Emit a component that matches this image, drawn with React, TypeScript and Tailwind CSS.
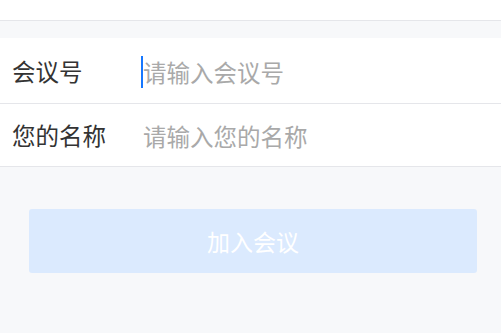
import React, { useState } from 'react';

const FONT = { fontFamily: '"Noto Sans CJK SC", "Noto Sans", sans-serif' };

type FieldRowProps = {
  label: string;
  placeholder: string;
  value: string;
  onChange: (v: string) => void;
  focused?: boolean;
  className: string;
};

function FieldRow({ label, placeholder, value, onChange, focused, className }: FieldRowProps) {
  return (
    <div className={`flex items-center bg-white border-b border-[#e5e6ea] ${className}`}>
      <label className="w-[143px] pl-[12px] text-[23.5px] text-[#333333] leading-none">{label}</label>
      <div className="relative flex-1">
        {focused && (
          <span className="absolute left-[-2px] top-1/2 -translate-y-1/2 w-[2px] h-[32px] bg-[#1677ff]" />
        )}
        <input
          value={value}
          onChange={(e) => onChange(e.target.value)}
          placeholder={placeholder}
          className="w-full bg-transparent outline-none text-[23.5px] leading-none text-[#333333] placeholder:text-[#a9a9a9] caret-transparent"
          style={FONT}
        />
      </div>
    </div>
  );
}

export default function App() {
  const [meetingId, setMeetingId] = useState('');
  const [name, setName] = useState('');
  const canJoin = meetingId.trim() !== '' && name.trim() !== '';

  return (
    <div className="w-[501px] h-[333px] bg-[#f7f8fa] overflow-hidden" style={FONT}>
      <div className="h-[21px] bg-white border-b border-[#e5e6ea]" />
      <div className="h-[17px]" />
      <FieldRow
        label="会议号"
        placeholder="请输入会议号"
        value={meetingId}
        onChange={setMeetingId}
        focused
        className="h-[66px] pt-[2px]"
      />
      <FieldRow
        label="您的名称"
        placeholder="请输入您的名称"
        value={name}
        onChange={setName}
        className="h-[63px] pt-[1px]"
      />
      <div className="pt-[42px] pl-[29px]">
        <button
          disabled={!canJoin}
          className="w-[448px] h-[64px] rounded-[3px] bg-[#dbeafe] text-white text-[23px] leading-none"
        >
          加入会议
        </button>
      </div>
    </div>
  );
}
